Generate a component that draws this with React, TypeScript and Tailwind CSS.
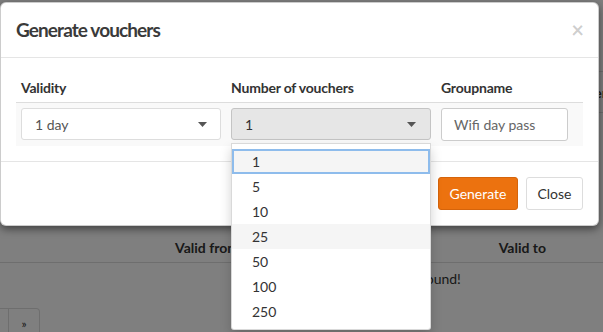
import React from "react";

function Caret() {
  return (
    <svg width="9" height="5" viewBox="0 0 9 5" className="shrink-0">
      <path d="M0 0 H9 L4.5 5 Z" fill="#555" />
    </svg>
  );
}

export default function App() {
  const options = ["1", "5", "10", "25", "50", "100", "250"];
  return (
    <div className="relative w-[603px] h-[332px] overflow-hidden bg-white font-['Lato',sans-serif] text-[#333]">
      {/* page behind the modal */}
      <div className="flex flex-col">
        <h1 className="mt-[-30px] ml-[-2px] h-[33px] text-[30px] font-bold leading-[33px]">Vouchers</h1>
        <div className="flex h-[230px] flex-col">
          <div className="mt-[68px] flex h-[42px] items-center justify-end border-y border-[#ddd] text-[14px] font-bold">
            <span className="mr-[-4px]">Voucher</span>
          </div>
        </div>
        <div className="flex h-[30px] items-center border-b border-[#ddd] text-[14px] font-bold">
          <span className="ml-[175px]">Valid from</span>
          <span className="ml-auto mr-[57px]">Valid to</span>
        </div>
        <div className="flex h-[30px] items-center text-[14px]">
          <span className="ml-[340px]">No vouchers found!</span>
        </div>
        <div className="mt-[15px] flex h-[32px] text-[12px]">
          <div className="w-[9px] border border-l-0 border-[#ddd]" />
          <div className="flex w-[31px] items-center justify-center rounded-tr-[4px] border border-l-0 border-[#ddd]">»</div>
        </div>
      </div>

      {/* backdrop */}
      <div className="absolute inset-0 bg-black/50" />

      {/* modal */}
      <div className="absolute left-0 top-[2px] w-[599px] rounded-[6px] border border-black/20 bg-white shadow-[0_3px_9px_rgba(0,0,0,0.5)]">
        <div className="flex h-[55px] items-center justify-between border-b border-[#e5e5e5] px-[15px]">
          <h4 className="text-[19px] font-bold tracking-[-0.9px] text-[#3a3a3a]">Generate vouchers</h4>
          <span className="mr-[-1px] text-[22px] font-bold leading-none text-black/20">×</span>
        </div>

        <div className="px-[15px] py-[15px]">
          <div className="flex h-[29px] items-center text-[14px] font-bold tracking-[-0.2px] text-[#333]">
            <div className="w-[210px] pl-[5px]">Validity</div>
            <div className="w-[210px] pl-[5px]">Number of vouchers</div>
            <div className="flex-1 pl-[5px]">Groupname</div>
          </div>
          <div className="flex border-t border-[#ddd] bg-[#f9f9f9] py-[5px] text-[14px] text-[#555]">
            <div className="w-[210px] px-[5px]">
              <div className="flex h-[32px] w-[200px] items-center justify-between rounded-[3px] border border-[#ddd] bg-white pl-[13px] pr-[13px]">
                <span>1 day</span>
                <Caret />
              </div>
            </div>
            <div className="relative w-[210px] px-[5px]">
              <div className="flex h-[32px] w-[200px] items-center justify-between rounded-[3px] border border-[#c4c4c4] bg-[#e6e6e6] pl-[13px] pr-[14px]">
                <span className="text-[#333]">1</span>
                <Caret />
              </div>
              <div className="absolute left-[5px] top-[35px] z-10 w-[200px] rounded-b-[3px] border border-black/15 bg-white py-[5px] shadow-[0_6px_12px_rgba(0,0,0,0.18)]">
                {options.map((o, i) => (
                  <div
                    key={o}
                    className={
                      i === 0
                        ? "flex h-[25px] items-center border-2 border-[#8ebcec] bg-[#f5f5f5] pl-[18px] text-[#333]"
                        : i === 3
                        ? "flex h-[25px] items-center bg-[#f5f5f5] pl-[20px] text-[#333]"
                        : "flex h-[25px] items-center pl-[20px] text-[#333]"
                    }
                  >
                    {o}
                  </div>
                ))}
              </div>
            </div>
            <div className="flex-1 px-[5px]">
              <div className="flex h-[33px] w-[127px] items-center rounded-[3px] border border-[#ccc] bg-white pl-[12px] text-[#666]">
                Wifi day pass
              </div>
            </div>
          </div>
        </div>

        <div className="flex justify-end gap-[8px] border-t border-[#e5e5e5] p-[15px] text-[14px]">
          <button className="h-[33px] w-[80px] rounded-[3px] border border-[#d5640b] bg-[#ec720f] text-white">Generate</button>
          <button className="h-[33px] w-[57px] rounded-[3px] border border-[#ddd] bg-white text-[#333]">Close</button>
        </div>
      </div>
    </div>
  );
}
